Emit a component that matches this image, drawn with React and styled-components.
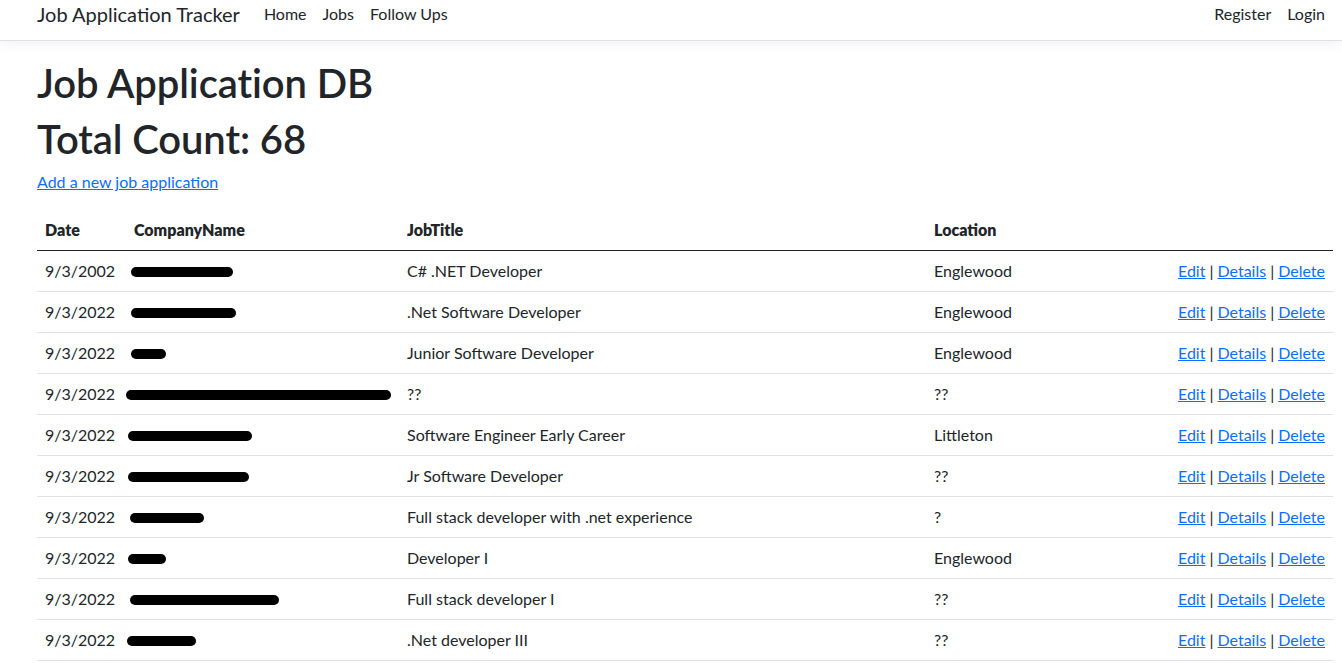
import React from "react";
import styled, { createGlobalStyle } from "styled-components";

const GlobalStyle = createGlobalStyle`
  html, body {
    margin: 0;
    padding: 0;
    background: #fff;
  }
  body {
    font-family: Lato, "Noto Sans", "Liberation Sans", sans-serif;
    font-size: 16px;
    line-height: 1.5;
    color: #212529;
  }
  * { box-sizing: border-box; }
`;

const Navbar = styled.header`
  height: 41px;
  display: flex;
  align-items: flex-start;
  padding: 0 9px 0 37px;
  background: #fff;
  border-bottom: 1px solid #dee2e6;
  box-shadow: 0 4px 12px rgba(0, 0, 0, 0.05);
`;

const Brand = styled.a`
  font-size: 20px;
  line-height: 28px;
  color: #212529;
  text-decoration: none;
  margin-right: 16px;
`;

const NavList = styled.nav`
  display: flex;
  flex: ${(p) => (p.$grow ? 1 : "none")};
`;

const NavLink = styled.a`
  padding: 2px 8px 0;
  line-height: 24px;
  color: #212529;
  text-decoration: none;
`;

const Main = styled.main`
  padding: 18px 9px 0 37px;
`;

const Title = styled.h1`
  margin: 0 0 8px;
  font-size: 40px;
  font-weight: 600;
  line-height: 1.2;
  letter-spacing: -0.1px;
`;

const Lead = styled.p`
  margin: -1px 0 16px;
`;

const Link = styled.a`
  color: #0d6efd;
  text-decoration: underline;
`;

const Table = styled.table`
  width: 100%;
  border-collapse: collapse;
  table-layout: fixed;
`;

const Th = styled.th`
  width: ${(p) => p.$w || "auto"};
  text-align: left;
  font-weight: 800;
  padding: 8px;
  border-bottom: 1px solid #212529;
  vertical-align: bottom;
`;

const Td = styled.td`
  padding: 8px;
  border-bottom: 1px solid #dee2e6;
  text-align: ${(p) => (p.$right ? "right" : "left")};
  white-space: nowrap;
`;

const Redact = styled.span`
  display: inline-block;
  vertical-align: middle;
  width: ${(p) => p.$w}px;
  height: 10px;
  margin-left: ${(p) => p.$off}px;
  margin-top: -2px;
  background: #000;
  border-radius: 5px;
`;

const Sep = styled.span`
  color: #212529;
  margin: 0 4px;
`;

const rows = [
  ["9/3/2002", 102, -3, "C# .NET Developer", "Englewood"],
  ["9/3/2022", 105, -3, ".Net Software Developer", "Englewood"],
  ["9/3/2022", 35, -3, "Junior Software Developer", "Englewood"],
  ["9/3/2022", 265, -8, "??", "??"],
  ["9/3/2022", 124, -6, "Software Engineer Early Career", "Littleton"],
  ["9/3/2022", 121, -6, "Jr Software Developer", "??"],
  ["9/3/2022", 74, -4, "Full stack developer with .net experience", "?"],
  ["9/3/2022", 38, -6, "Developer I", "Englewood"],
  ["9/3/2022", 149, -4, "Full stack developer I", "??"],
  ["9/3/2022", 69, -7, ".Net developer III", "??"],
];

export default function App() {
  return (
    <>
      <GlobalStyle />
      <Navbar>
        <Brand href="#">Job Application Tracker</Brand>
        <NavList $grow>
          <NavLink href="#">Home</NavLink>
          <NavLink href="#">Jobs</NavLink>
          <NavLink href="#">Follow Ups</NavLink>
        </NavList>
        <NavList>
          <NavLink href="#">Register</NavLink>
          <NavLink href="#">Login</NavLink>
        </NavList>
      </Navbar>
      <Main>
        <Title>Job Application DB</Title>
        <Title>Total Count: 68</Title>
        <Lead>
          <Link href="#">Add a new job application</Link>
        </Lead>
        <Table>
          <thead>
            <tr>
              <Th $w="89px">Date</Th>
              <Th $w="273px">CompanyName</Th>
              <Th $w="527px">JobTitle</Th>
              <Th $w="180px">Location</Th>
              <Th />
            </tr>
          </thead>
          <tbody>
            {rows.map(([date, w, off, title, loc], i) => (
              <tr key={i}>
                <Td>{date}</Td>
                <Td>
                  <Redact $w={w} $off={off} />
                </Td>
                <Td>{title}</Td>
                <Td>{loc}</Td>
                <Td $right>
                  <Link href="#">Edit</Link>
                  <Sep>|</Sep>
                  <Link href="#">Details</Link>
                  <Sep>|</Sep>
                  <Link href="#">Delete</Link>
                </Td>
              </tr>
            ))}
          </tbody>
        </Table>
      </Main>
    </>
  );
}
